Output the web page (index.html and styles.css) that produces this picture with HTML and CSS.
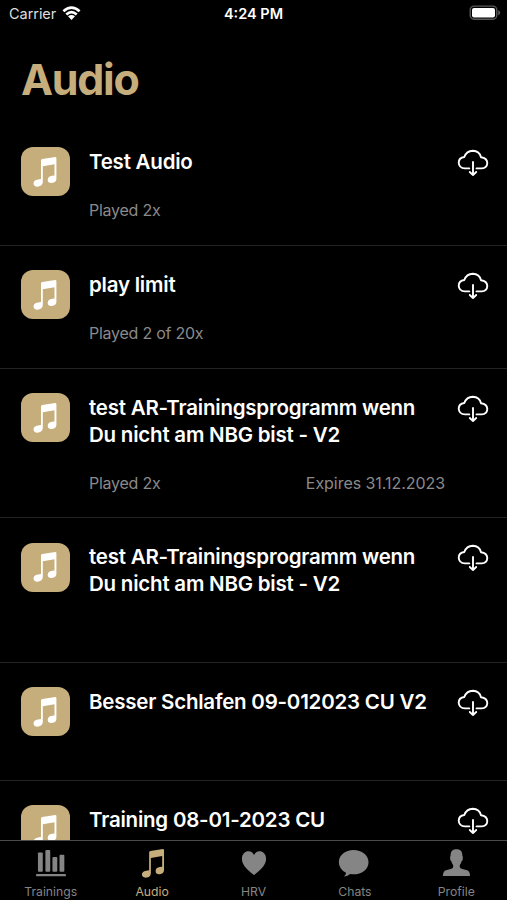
FILE: index.html
```
<!DOCTYPE html>
<html lang="en">

<head>
    <meta charset="UTF-8">
    <meta name="viewport" content="width=device-width, initial-scale=1.0">
    <title>Audio</title>
    <link rel="stylesheet" href="styles.css">
</head>

<body>
    <svg class="symbols">
        <symbol id="note" viewBox="0 0 24 30">
            <path d="M8 3.6 Q8 2.3 9.3 2 L22.3 0 Q23.4 0 23.4 1.2 V22 Q23.2 25.5 19 26 Q14.7 26.3 14.7 22.7 Q14.9 19.2 19 18.7 L21.5 18.4 V7.2 L9.8 9.2 V25 Q9.6 28.9 5.3 29.6 Q.7 30 .5 26.5 Q.6 23 5 22.4 L8 22 Z" />
        </symbol>
        <symbol id="download" viewBox="0 0 32 28">
            <path d="M12.3 19.4 H8 Q2 19 1.7 13.7 Q1.8 8.8 7.3 8 Q9.5 2 15.8 1.8 Q22.5 2 24 8.3 Q30 9 30.3 14 Q30 19.2 24.7 19.4 H19.5 M16 13 V26 M12.8 23 L16 26.1 L19.2 23" />
        </symbol>
    </svg>

    <div class="screen">
        <header class="status-bar">
            <div class="carrier">
                <span>Carrier</span>
                <svg class="wifi" viewBox="0 0 19 15">
                    <path d="M1.4 5.3 Q9.5 -2 17.6 5.3 M4.3 8.4 Q9.5 3.8 14.7 8.4" />
                    <path class="wifi-dot" d="M6 10.3 Q9.5 7.7 13 10.3 L9.5 14 Z" />
                </svg>
            </div>
            <span class="time">4:24 PM</span>
            <svg class="battery" viewBox="0 0 32 16">
                <rect class="battery-case" x="1.2" y="1.1" width="26.6" height="13.2" rx="4" />
                <rect class="battery-level" x="3" y="3" width="23" height="9.4" rx="2" />
                <path class="battery-tip" d="M29.2 5.2 Q31.2 6 31.2 7.8 Q31.2 9.4 29.2 10.2 Z" />
            </svg>
        </header>

        <h1>Audio</h1>

        <main class="list">
            <article class="item">
                <div class="thumb"><svg><use href="#note" /></svg></div>
                <div class="details">
                    <h2>Test Audio</h2>
                    <div class="meta"><span>Played 2x</span></div>
                </div>
                <svg class="download"><use href="#download" /></svg>
            </article>
            <article class="item">
                <div class="thumb"><svg><use href="#note" /></svg></div>
                <div class="details">
                    <h2>play limit</h2>
                    <div class="meta"><span>Played 2 of 20x</span></div>
                </div>
                <svg class="download"><use href="#download" /></svg>
            </article>
            <article class="item tall">
                <div class="thumb"><svg><use href="#note" /></svg></div>
                <div class="details">
                    <h2>test AR-Trainingsprogramm wenn<br>Du nicht am NBG bist - V2</h2>
                    <div class="meta"><span>Played 2x</span><span class="expires">Expires 31.12.2023</span></div>
                </div>
                <svg class="download"><use href="#download" /></svg>
            </article>
            <article class="item no-meta">
                <div class="thumb"><svg><use href="#note" /></svg></div>
                <div class="details">
                    <h2>test AR-Trainingsprogramm wenn<br>Du nicht am NBG bist - V2</h2>
                </div>
                <svg class="download"><use href="#download" /></svg>
            </article>
            <article class="item short">
                <div class="thumb"><svg><use href="#note" /></svg></div>
                <div class="details">
                    <h2>Besser Schlafen 09-012023 CU V2</h2>
                </div>
                <svg class="download"><use href="#download" /></svg>
            </article>
            <article class="item short">
                <div class="thumb"><svg><use href="#note" /></svg></div>
                <div class="details">
                    <h2>Training 08-01-2023 CU</h2>
                </div>
                <svg class="download"><use href="#download" /></svg>
            </article>
        </main>

        <nav class="tabs">
            <a class="tab">
                <svg viewBox="0 0 34 30">
                    <rect x="3.5" y="3.5" width="5" height="20" rx="1" />
                    <rect x="11.2" y="1" width="5" height="22.5" rx="1" />
                    <rect x="18.5" y="8.3" width="5" height="15.2" rx="1" />
                    <rect x="25.8" y="6" width="5" height="17.5" rx="1" />
                    <rect x="1.5" y="25.8" width="31" height="2.5" rx="1" />
                </svg>
                <span>Trainings</span>
            </a>
            <a class="tab active">
                <svg class="tab-note"><use href="#note" /></svg>
                <span>Audio</span>
            </a>
            <a class="tab">
                <svg viewBox="0 0 34 30">
                    <path d="M17 27 C13 23.5 4.5 17.5 4.5 10.5 C4.5 5 8 2.4 11.2 2.4 C14 2.4 16 4 17 6.3 C18 4 20 2.4 22.8 2.4 C26 2.4 29.5 5 29.5 10.5 C29.5 17.5 21 23.5 17 27 Z" />
                </svg>
                <span>HRV</span>
            </a>
            <a class="tab">
                <svg viewBox="0 0 34 30">
                    <path d="M15.5 1 C24 1 31 6.4 31 13.6 C31 21 24 26.2 15.5 26.2 Q13.5 26.2 12 25.9 Q9.5 28.2 5.5 28.5 Q7.8 26.5 7.7 24.5 Q.3 20.7 .3 13.6 C.3 6.4 7 1 15.5 1 Z" />
                </svg>
                <span>Chats</span>
            </a>
            <a class="tab">
                <svg viewBox="0 0 34 30">
                    <path d="M17.5 .2 C22 .2 23.8 3 23.6 7 Q24.5 7.8 23.9 11 Q23.7 12.3 22.8 12.7 Q22.3 15 20.9 16.7 V18.5 Q21.1 20 23.5 20.7 L28.5 22.1 Q31.5 23.3 31.5 27.9 H3.5 Q3.5 23.3 6.5 22.1 L11.5 20.7 Q13.9 20 14.1 18.5 V16.7 Q12.7 15 12.2 12.7 Q11.3 12.3 11.1 11 Q10.5 7.8 11.4 7 C11.2 3 13 .2 17.5 .2 Z" />
                </svg>
                <span>Profile</span>
            </a>
        </nav>
    </div>
</body>

</html>
```
FILE: styles.css
```
* {
    box-sizing: border-box;
}

body {
    margin: 0;
    background-color: #000;
    color: #fff;
    font-family: Inter, "Liberation Sans", sans-serif;
}

.symbols {
    display: none;
}

.screen {
    display: flex;
    flex-direction: column;
    height: 900px;
    overflow: hidden;
}

.status-bar {
    display: grid;
    grid-template-columns: 1fr auto 1fr;
    align-items: center;
    height: 27px;
    padding: 0 9px;
    font-size: 14.5px;
    line-height: 27px;
}

.carrier {
    display: flex;
    align-items: center;
    gap: 6px;
    color: #ddd;
    letter-spacing: -0.05px;
}

.wifi {
    width: 19px;
    height: 15px;
    margin-top: -1px;
    fill: none;
    stroke: #fff;
    stroke-width: 2.7;
}

.wifi .wifi-dot {
    fill: #fff;
    stroke: none;
}

.time {
    font-weight: 600;
}

.battery {
    width: 32px;
    height: 16px;
    margin-right: -3px;
    margin-top: -1px;
    justify-self: end;
}

.battery-case {
    fill: none;
    stroke: #59595b;
    stroke-width: 1.4;
}

.battery-level {
    fill: #fff;
}

.battery-tip {
    fill: #59595b;
}

h1 {
    height: 95.5px;
    margin: 0;
    padding: 26px 0 0 21px;
    color: #c6ad7c;
    font-size: 43px;
    font-weight: 700;
    letter-spacing: -1.3px;
    line-height: 52px;
}

.list {
    flex: 1;
    min-height: 0;
    overflow: hidden;
}

.item {
    display: flex;
    height: 123px;
    padding: 25px 18px 0 20.5px;
    border-bottom: 1px solid #242424;
}

.item.tall {
    height: 149.5px;
}

.item.no-meta {
    height: 144.5px;
}

.item.short {
    height: 118px;
}

.thumb {
    display: flex;
    flex-shrink: 0;
    align-items: center;
    justify-content: center;
    width: 49px;
    height: 49px;
    margin-top: -0.5px;
    border-radius: 12px;
    background-color: #c6ad7c;
    fill: #fff;
}

.thumb svg {
    width: 24px;
    height: 30px;
}

.details {
    flex: 1;
    margin-left: 19.5px;
}

h2 {
    margin: 0;
    font-size: 20.5px;
    font-weight: 600;
    letter-spacing: -0.22px;
    line-height: 27px;
    white-space: nowrap;
}

.meta {
    display: flex;
    justify-content: space-between;
    margin-top: 24px;
    padding-right: 12px;
    color: #8a8a8a;
    font-size: 16px;
    letter-spacing: -0.25px;
    line-height: 22px;
}

.expires {
    letter-spacing: -0.05px;
}

.download {
    width: 32px;
    height: 28px;
    margin-top: 1px;
    fill: none;
    stroke: #fff;
    stroke-width: 1.9;
    stroke-linecap: round;
    stroke-linejoin: round;
}

.tabs {
    display: flex;
    flex-shrink: 0;
    height: 60px;
    border-top: 1px solid #4a4a4a;
}

.tab {
    display: flex;
    flex: 1;
    flex-direction: column;
    align-items: center;
    padding-top: 8px;
    color: #858585;
    fill: #858585;
    font-size: 12.2px;
    line-height: 16px;
}

.tab svg {
    width: 34px;
    height: 30px;
    margin-bottom: 6px;
}

.tab .tab-note {
    width: 24px;
    margin-left: 2px;
}

.tab.active {
    color: #c6ad7c;
    fill: #c6ad7c;
}
```
